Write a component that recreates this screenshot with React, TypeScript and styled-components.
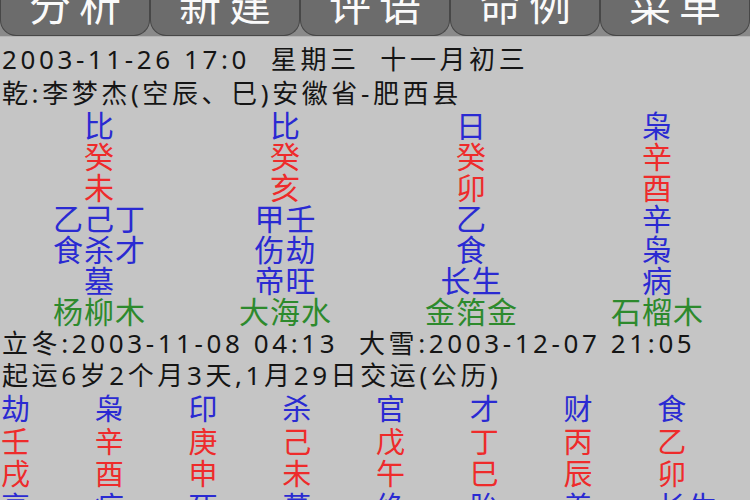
import styled, { createGlobalStyle } from "styled-components";

const GlobalStyle = createGlobalStyle`
  html, body {
    margin: 0;
    padding: 0;
    background: #c5c5c5;
  }
  body {
    font-family: "Noto Sans", "Noto Sans CJK SC", sans-serif;
    color: #151515;
    overflow: hidden;
  }
`;

const BLUE = "#2a2ad2";
const RED = "#ee2b2b";
const GREEN = "#2d8a2d";

const Screen = styled.div`
  width: 750px;
  height: 500px;
  overflow: hidden;
  background: #c5c5c5;
`;

const TabBar = styled.nav`
  display: grid;
  grid-template-columns: repeat(5, 1fr);
  height: 36px;
  background: #8a8a8a;
  border-bottom: 1px solid #b4b4b4;
  overflow: hidden;
`;

const Tab = styled.div`
  display: flex;
  justify-content: center;
  align-items: flex-start;
  background: #6c6c6c;
  border: 1.5px solid #474747;
  border-top: none;
  border-radius: 0 0 16px 16px;
  overflow: hidden;
`;

const TabLabel = styled.span`
  color: #fafafa;
  font-size: 42px;
  line-height: 42px;
  margin-top: -16px;
  letter-spacing: 8px;
  text-indent: 8px;
  white-space: nowrap;
`;

const Info = styled.div`
  padding-top: 5px;
`;

const InfoLine = styled.div<{ $height?: number }>`
  height: ${(p) => p.$height ?? 34}px;
  line-height: ${(p) => p.$height ?? 34}px;
  font-size: 26px;
  letter-spacing: 3.6px;
  padding-left: 2px;
  white-space: pre;
`;

const Pillars = styled.div`
  display: grid;
  grid-template-columns: repeat(4, 1fr);
  padding-left: 6px;
`;

const Pillar = styled.div`
  display: flex;
  flex-direction: column;
  align-items: center;
`;

const Cell = styled.div<{ $color: string }>`
  height: 31px;
  line-height: 31px;
  font-size: 30px;
  letter-spacing: 1px;
  text-indent: 1px;
  color: ${(p) => p.$color};
  white-space: nowrap;
`;

const Luck = styled.div`
  display: grid;
  grid-template-columns: repeat(8, 1fr);
  margin-top: 2px;
`;

const LuckCol = styled.div`
  display: flex;
  flex-direction: column;
  padding-left: 1px;
`;

const LuckCell = styled.div<{ $color: string }>`
  height: 32.5px;
  line-height: 32.5px;
  font-size: 29px;
  letter-spacing: 2px;
  color: ${(p) => p.$color};
  white-space: nowrap;
`;

const tabs = ["分析", "新建", "评语", "命例", "菜单"];

const pillars = [
  ["比", "癸", "未", "乙己丁", "食杀才", "墓", "杨柳木"],
  ["比", "癸", "亥", "甲壬", "伤劫", "帝旺", "大海水"],
  ["日", "癸", "卯", "乙", "食", "长生", "金箔金"],
  ["枭", "辛", "酉", "辛", "枭", "病", "石榴木"],
];

const pillarColors = [BLUE, RED, RED, BLUE, BLUE, BLUE, GREEN];

const luck = [
  ["劫", "壬", "戌", "衰"],
  ["枭", "辛", "酉", "病"],
  ["印", "庚", "申", "死"],
  ["杀", "己", "未", "墓"],
  ["官", "戊", "午", "绝"],
  ["才", "丁", "巳", "胎"],
  ["财", "丙", "辰", "养"],
  ["食", "乙", "卯", "长生"],
];

const luckColors = [BLUE, RED, RED, BLUE];

export default function App() {
  return (
    <>
      <GlobalStyle />
      <Screen>
        <TabBar>
          {tabs.map((t) => (
            <Tab key={t}>
              <TabLabel>{t}</TabLabel>
            </Tab>
          ))}
        </TabBar>

        <Info>
          <InfoLine>{"2003-11-26 17:0  星期三  十一月初三"}</InfoLine>
          <InfoLine>{"乾:李梦杰(空辰、巳)安徽省-肥西县"}</InfoLine>
        </Info>

        <Pillars>
          {pillars.map((col, i) => (
            <Pillar key={i}>
              {col.map((text, j) => (
                <Cell key={j} $color={pillarColors[j]}>
                  {text}
                </Cell>
              ))}
            </Pillar>
          ))}
        </Pillars>

        <InfoLine $height={32}>{"立冬:2003-11-08 04:13  大雪:2003-12-07 21:05"}</InfoLine>
        <InfoLine $height={32}>{"起运6岁2个月3天,1月29日交运(公历)"}</InfoLine>

        <Luck>
          {luck.map((col, i) => (
            <LuckCol key={i}>
              {col.map((text, j) => (
                <LuckCell key={j} $color={luckColors[j]}>
                  {text}
                </LuckCell>
              ))}
            </LuckCol>
          ))}
        </Luck>
      </Screen>
    </>
  );
}
